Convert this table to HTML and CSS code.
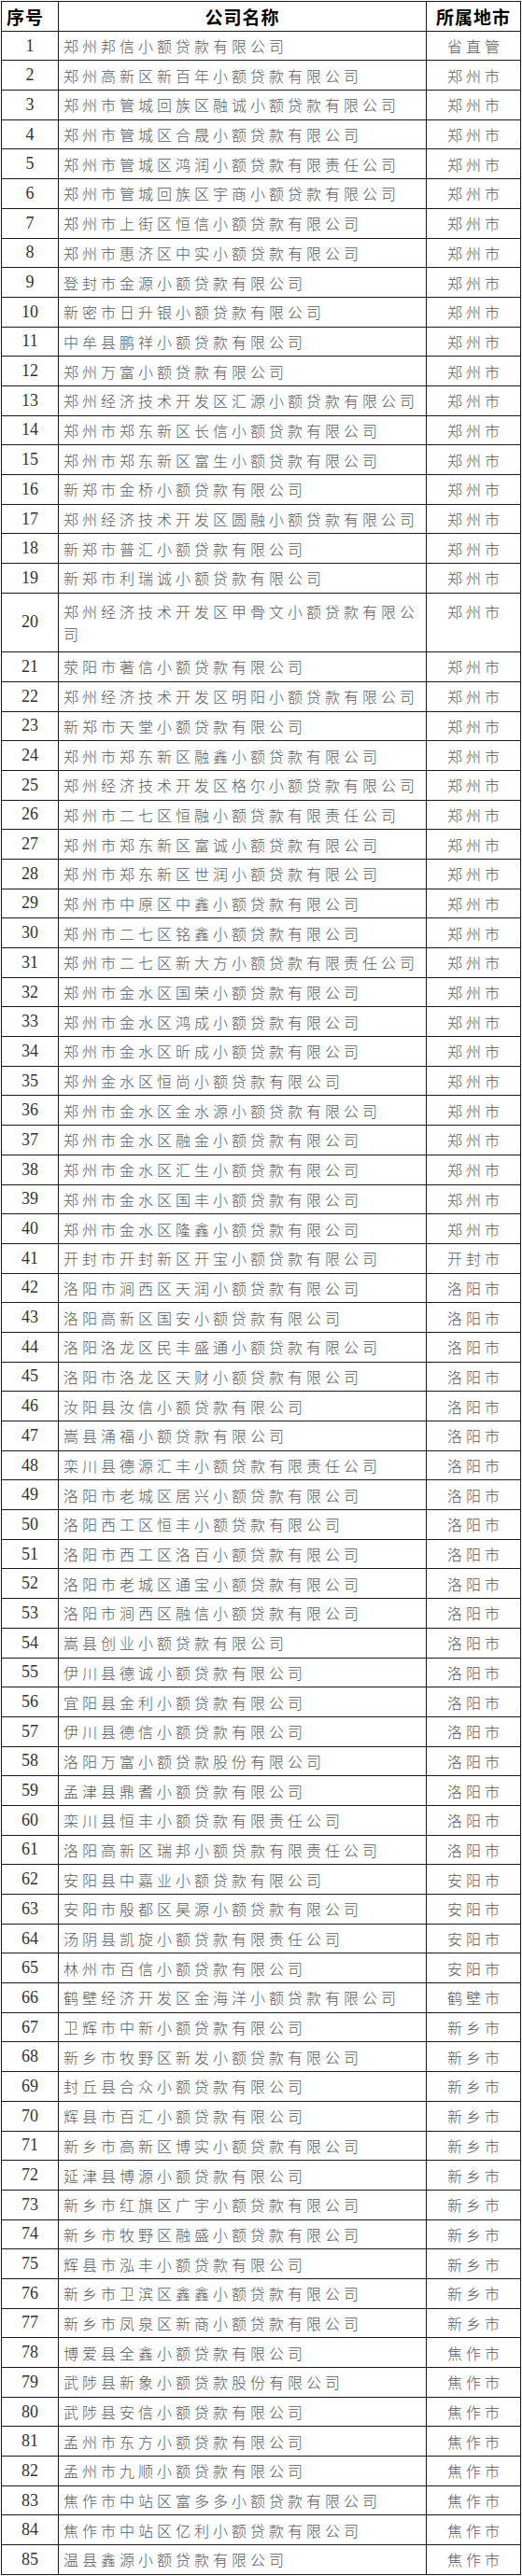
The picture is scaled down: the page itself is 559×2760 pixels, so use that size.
FILE: index.html
```html
<!DOCTYPE html>
<html lang="zh-CN">
<head>
<meta charset="utf-8">
<title>小额贷款公司名单</title>
<link rel="stylesheet" href="styles.css">
</head>
<body>
<div class="sheet">
  <div class="row head"><div class="c no">序号</div><div class="c name">公司名称</div><div class="c city">所属地市</div></div>
  <div class="row"><div class="c no">1</div><div class="c name">郑州邦信小额贷款有限公司</div><div class="c city">省直管</div></div>
  <div class="row"><div class="c no">2</div><div class="c name">郑州高新区新百年小额贷款有限公司</div><div class="c city">郑州市</div></div>
  <div class="row"><div class="c no">3</div><div class="c name">郑州市管城回族区融诚小额贷款有限公司</div><div class="c city">郑州市</div></div>
  <div class="row"><div class="c no">4</div><div class="c name">郑州市管城区合晟小额贷款有限公司</div><div class="c city">郑州市</div></div>
  <div class="row"><div class="c no">5</div><div class="c name">郑州市管城区鸿润小额贷款有限责任公司</div><div class="c city">郑州市</div></div>
  <div class="row"><div class="c no">6</div><div class="c name">郑州市管城回族区宇商小额贷款有限公司</div><div class="c city">郑州市</div></div>
  <div class="row"><div class="c no">7</div><div class="c name">郑州市上街区恒信小额贷款有限公司</div><div class="c city">郑州市</div></div>
  <div class="row"><div class="c no">8</div><div class="c name">郑州市惠济区中实小额贷款有限公司</div><div class="c city">郑州市</div></div>
  <div class="row"><div class="c no">9</div><div class="c name">登封市金源小额贷款有限公司</div><div class="c city">郑州市</div></div>
  <div class="row"><div class="c no">10</div><div class="c name">新密市日升银小额贷款有限公司</div><div class="c city">郑州市</div></div>
  <div class="row"><div class="c no">11</div><div class="c name">中牟县鹏祥小额贷款有限公司</div><div class="c city">郑州市</div></div>
  <div class="row"><div class="c no">12</div><div class="c name">郑州万富小额贷款有限公司</div><div class="c city">郑州市</div></div>
  <div class="row"><div class="c no">13</div><div class="c name">郑州经济技术开发区汇源小额贷款有限公司</div><div class="c city">郑州市</div></div>
  <div class="row"><div class="c no">14</div><div class="c name">郑州市郑东新区长信小额贷款有限公司</div><div class="c city">郑州市</div></div>
  <div class="row"><div class="c no">15</div><div class="c name">郑州市郑东新区富生小额贷款有限公司</div><div class="c city">郑州市</div></div>
  <div class="row"><div class="c no">16</div><div class="c name">新郑市金桥小额贷款有限公司</div><div class="c city">郑州市</div></div>
  <div class="row"><div class="c no">17</div><div class="c name">郑州经济技术开发区圆融小额贷款有限公司</div><div class="c city">郑州市</div></div>
  <div class="row"><div class="c no">18</div><div class="c name">新郑市普汇小额贷款有限公司</div><div class="c city">郑州市</div></div>
  <div class="row"><div class="c no">19</div><div class="c name">新郑市利瑞诚小额贷款有限公司</div><div class="c city">郑州市</div></div>
  <div class="row tall"><div class="c no">20</div><div class="c name">郑州经济技术开发区甲骨文小额贷款有限公司</div><div class="c city">郑州市</div></div>
  <div class="row"><div class="c no">21</div><div class="c name">荥阳市著信小额贷款有限公司</div><div class="c city">郑州市</div></div>
  <div class="row"><div class="c no">22</div><div class="c name">郑州经济技术开发区明阳小额贷款有限公司</div><div class="c city">郑州市</div></div>
  <div class="row"><div class="c no">23</div><div class="c name">新郑市天堂小额贷款有限公司</div><div class="c city">郑州市</div></div>
  <div class="row"><div class="c no">24</div><div class="c name">郑州市郑东新区融鑫小额贷款有限公司</div><div class="c city">郑州市</div></div>
  <div class="row"><div class="c no">25</div><div class="c name">郑州经济技术开发区格尔小额贷款有限公司</div><div class="c city">郑州市</div></div>
  <div class="row"><div class="c no">26</div><div class="c name">郑州市二七区恒融小额贷款有限责任公司</div><div class="c city">郑州市</div></div>
  <div class="row"><div class="c no">27</div><div class="c name">郑州市郑东新区富诚小额贷款有限公司</div><div class="c city">郑州市</div></div>
  <div class="row"><div class="c no">28</div><div class="c name">郑州市郑东新区世润小额贷款有限公司</div><div class="c city">郑州市</div></div>
  <div class="row"><div class="c no">29</div><div class="c name">郑州市中原区中鑫小额贷款有限公司</div><div class="c city">郑州市</div></div>
  <div class="row"><div class="c no">30</div><div class="c name">郑州市二七区铭鑫小额贷款有限公司</div><div class="c city">郑州市</div></div>
  <div class="row"><div class="c no">31</div><div class="c name">郑州市二七区新大方小额贷款有限责任公司</div><div class="c city">郑州市</div></div>
  <div class="row"><div class="c no">32</div><div class="c name">郑州市金水区国荣小额贷款有限公司</div><div class="c city">郑州市</div></div>
  <div class="row"><div class="c no">33</div><div class="c name">郑州市金水区鸿成小额贷款有限公司</div><div class="c city">郑州市</div></div>
  <div class="row"><div class="c no">34</div><div class="c name">郑州市金水区昕成小额贷款有限公司</div><div class="c city">郑州市</div></div>
  <div class="row"><div class="c no">35</div><div class="c name">郑州金水区恒尚小额贷款有限公司</div><div class="c city">郑州市</div></div>
  <div class="row"><div class="c no">36</div><div class="c name">郑州市金水区金水源小额贷款有限公司</div><div class="c city">郑州市</div></div>
  <div class="row"><div class="c no">37</div><div class="c name">郑州市金水区融金小额贷款有限公司</div><div class="c city">郑州市</div></div>
  <div class="row"><div class="c no">38</div><div class="c name">郑州市金水区汇生小额贷款有限公司</div><div class="c city">郑州市</div></div>
  <div class="row"><div class="c no">39</div><div class="c name">郑州市金水区国丰小额贷款有限公司</div><div class="c city">郑州市</div></div>
  <div class="row"><div class="c no">40</div><div class="c name">郑州市金水区隆鑫小额贷款有限公司</div><div class="c city">郑州市</div></div>
  <div class="row"><div class="c no">41</div><div class="c name">开封市开封新区开宝小额贷款有限公司</div><div class="c city">开封市</div></div>
  <div class="row"><div class="c no">42</div><div class="c name">洛阳市涧西区天润小额贷款有限公司</div><div class="c city">洛阳市</div></div>
  <div class="row"><div class="c no">43</div><div class="c name">洛阳高新区国安小额贷款有限公司</div><div class="c city">洛阳市</div></div>
  <div class="row"><div class="c no">44</div><div class="c name">洛阳洛龙区民丰盛通小额贷款有限公司</div><div class="c city">洛阳市</div></div>
  <div class="row"><div class="c no">45</div><div class="c name">洛阳市洛龙区天财小额贷款有限公司</div><div class="c city">洛阳市</div></div>
  <div class="row"><div class="c no">46</div><div class="c name">汝阳县汝信小额贷款有限公司</div><div class="c city">洛阳市</div></div>
  <div class="row"><div class="c no">47</div><div class="c name">嵩县涌福小额贷款有限公司</div><div class="c city">洛阳市</div></div>
  <div class="row"><div class="c no">48</div><div class="c name">栾川县德源汇丰小额贷款有限责任公司</div><div class="c city">洛阳市</div></div>
  <div class="row"><div class="c no">49</div><div class="c name">洛阳市老城区居兴小额贷款有限公司</div><div class="c city">洛阳市</div></div>
  <div class="row"><div class="c no">50</div><div class="c name">洛阳西工区恒丰小额贷款有限公司</div><div class="c city">洛阳市</div></div>
  <div class="row"><div class="c no">51</div><div class="c name">洛阳市西工区洛百小额贷款有限公司</div><div class="c city">洛阳市</div></div>
  <div class="row"><div class="c no">52</div><div class="c name">洛阳市老城区通宝小额贷款有限公司</div><div class="c city">洛阳市</div></div>
  <div class="row"><div class="c no">53</div><div class="c name">洛阳市涧西区融信小额贷款有限公司</div><div class="c city">洛阳市</div></div>
  <div class="row"><div class="c no">54</div><div class="c name">嵩县创业小额贷款有限公司</div><div class="c city">洛阳市</div></div>
  <div class="row"><div class="c no">55</div><div class="c name">伊川县德诚小额贷款有限公司</div><div class="c city">洛阳市</div></div>
  <div class="row"><div class="c no">56</div><div class="c name">宜阳县金利小额贷款有限公司</div><div class="c city">洛阳市</div></div>
  <div class="row"><div class="c no">57</div><div class="c name">伊川县德信小额贷款有限公司</div><div class="c city">洛阳市</div></div>
  <div class="row"><div class="c no">58</div><div class="c name">洛阳万富小额贷款股份有限公司</div><div class="c city">洛阳市</div></div>
  <div class="row"><div class="c no">59</div><div class="c name">孟津县鼎耆小额贷款有限公司</div><div class="c city">洛阳市</div></div>
  <div class="row"><div class="c no">60</div><div class="c name">栾川县恒丰小额贷款有限责任公司</div><div class="c city">洛阳市</div></div>
  <div class="row"><div class="c no">61</div><div class="c name">洛阳高新区瑞邦小额贷款有限责任公司</div><div class="c city">洛阳市</div></div>
  <div class="row"><div class="c no">62</div><div class="c name">安阳县中嘉业小额贷款有限公司</div><div class="c city">安阳市</div></div>
  <div class="row"><div class="c no">63</div><div class="c name">安阳市殷都区昊源小额贷款有限公司</div><div class="c city">安阳市</div></div>
  <div class="row"><div class="c no">64</div><div class="c name">汤阴县凯旋小额贷款有限责任公司</div><div class="c city">安阳市</div></div>
  <div class="row"><div class="c no">65</div><div class="c name">林州市百信小额贷款有限公司</div><div class="c city">安阳市</div></div>
  <div class="row"><div class="c no">66</div><div class="c name">鹤壁经济开发区金海洋小额贷款有限公司</div><div class="c city">鹤壁市</div></div>
  <div class="row"><div class="c no">67</div><div class="c name">卫辉市中新小额贷款有限公司</div><div class="c city">新乡市</div></div>
  <div class="row"><div class="c no">68</div><div class="c name">新乡市牧野区新发小额贷款有限公司</div><div class="c city">新乡市</div></div>
  <div class="row"><div class="c no">69</div><div class="c name">封丘县合众小额贷款有限公司</div><div class="c city">新乡市</div></div>
  <div class="row"><div class="c no">70</div><div class="c name">辉县市百汇小额贷款有限公司</div><div class="c city">新乡市</div></div>
  <div class="row"><div class="c no">71</div><div class="c name">新乡市高新区博实小额贷款有限公司</div><div class="c city">新乡市</div></div>
  <div class="row"><div class="c no">72</div><div class="c name">延津县博源小额贷款有限公司</div><div class="c city">新乡市</div></div>
  <div class="row"><div class="c no">73</div><div class="c name">新乡市红旗区广宇小额贷款有限公司</div><div class="c city">新乡市</div></div>
  <div class="row"><div class="c no">74</div><div class="c name">新乡市牧野区融盛小额贷款有限公司</div><div class="c city">新乡市</div></div>
  <div class="row"><div class="c no">75</div><div class="c name">辉县市泓丰小额贷款有限公司</div><div class="c city">新乡市</div></div>
  <div class="row"><div class="c no">76</div><div class="c name">新乡市卫滨区鑫鑫小额贷款有限公司</div><div class="c city">新乡市</div></div>
  <div class="row"><div class="c no">77</div><div class="c name">新乡市凤泉区新商小额贷款有限公司</div><div class="c city">新乡市</div></div>
  <div class="row"><div class="c no">78</div><div class="c name">博爱县全鑫小额贷款有限公司</div><div class="c city">焦作市</div></div>
  <div class="row"><div class="c no">79</div><div class="c name">武陟县新象小额贷款股份有限公司</div><div class="c city">焦作市</div></div>
  <div class="row"><div class="c no">80</div><div class="c name">武陟县安信小额贷款有限公司</div><div class="c city">焦作市</div></div>
  <div class="row"><div class="c no">81</div><div class="c name">孟州市东方小额贷款有限公司</div><div class="c city">焦作市</div></div>
  <div class="row"><div class="c no">82</div><div class="c name">孟州市九顺小额贷款有限公司</div><div class="c city">焦作市</div></div>
  <div class="row"><div class="c no">83</div><div class="c name">焦作市中站区富多多小额贷款有限公司</div><div class="c city">焦作市</div></div>
  <div class="row"><div class="c no">84</div><div class="c name">焦作市中站区亿利小额贷款有限公司</div><div class="c city">焦作市</div></div>
  <div class="row"><div class="c no">85</div><div class="c name">温县鑫源小额贷款有限公司</div><div class="c city">焦作市</div></div>
</div>
</body>
</html>
```

FILE: styles.css
```css
html, body {
  margin: 0;
  padding: 0;
  background: #fff;
}

.sheet {
  margin: 1px 0 0 1px;
  width: 557px;
  box-sizing: border-box;
  border-top: 1px solid #1a1a1a;
  border-left: 1px solid #1a1a1a;
  font-family: "Noto Sans CJK SC", "Noto Sans", sans-serif;
}

.row {
  display: grid;
  grid-template-columns: 61px 394px 101px;
  height: 31.7px;
  box-sizing: border-box;
  border-bottom: 1px solid #1a1a1a;
}

.row.tall {
  height: 63.4px;
}

.c {
  box-sizing: border-box;
  border-right: 1px solid #1a1a1a;
  display: flex;
  align-items: center;
  overflow: hidden;
  white-space: nowrap;
}

.no {
  justify-content: center;
  font-family: "Liberation Serif", "DejaVu Serif", serif;
  font-size: 18px;
  color: #333;
}

.name {
  padding-left: 5px;
  font-size: 16px;
  letter-spacing: 4px;
  color: #5a5a5a;
  font-weight: 300;
}

.city {
  justify-content: center;
  padding-left: 4px;
  font-size: 16px;
  letter-spacing: 4px;
  color: #5a5a5a;
  font-weight: 300;
}

.row.tall .name,
.row.tall .city {
  align-items: flex-start;
  line-height: 24px;
  padding-top: 7px;
}

.row.tall .name {
  display: block;
  white-space: normal;
  word-break: break-all;
  line-break: anywhere;
}

.head .c {
  font-family: "Noto Sans CJK SC", sans-serif;
  font-weight: 700;
  font-size: 19px;
  letter-spacing: 1px;
  color: #000;
  padding-left: 0;
}

.head .no {
  justify-content: flex-start;
  padding-left: 5px;
}

.head .name {
  justify-content: center;
}
```
